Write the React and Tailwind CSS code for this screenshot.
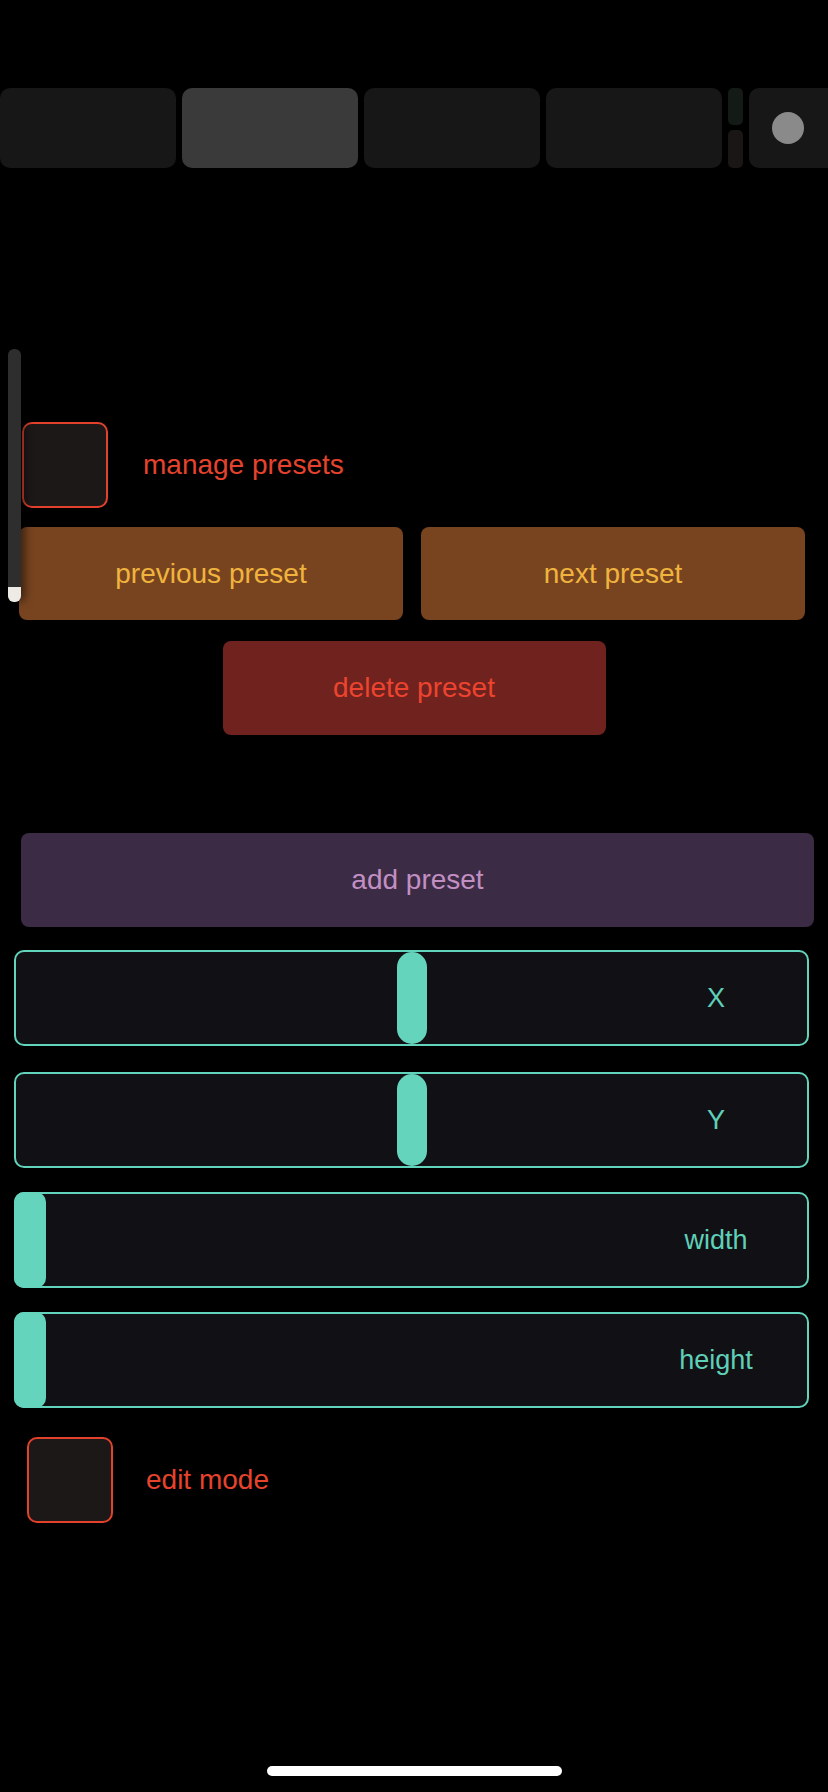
import React from 'react'

function Toggle({ label, className }) {
  return (
    <div className={"flex items-center " + className}>
      <div className="w-[86px] h-[86px] rounded-[10px] border-[2.5px] border-[#e2412c] bg-[#1c1817]" />
      <span className="text-[28px] text-[#e5432d]">{label}</span>
    </div>
  )
}

function Fader({ label, pos, className }) {
  return (
    <div className={"relative ml-[14px] w-[795px] h-[96px] rounded-[10px] border-[2.5px] border-[#62d4bb] bg-[#111115] " + className}>
      {pos === 'mid' ? (
        <div className="absolute top-0 bottom-0 left-[381px] w-[30px] rounded-full bg-[#64d5bc]" />
      ) : (
        <div className="absolute -top-[2px] -bottom-[2px] -left-[2px] w-[32px] rounded-[10px] bg-[#64d5bc]" />
      )}
      <span className="absolute top-1/2 -translate-y-1/2 left-[700px] -translate-x-1/2 text-[27px] text-[#5fd0b8]">{label}</span>
    </div>
  )
}

export default function App() {
  return (
    <div className="relative w-[828px] h-[1792px] bg-black overflow-hidden" style={{ fontFamily: '"Liberation Sans", Arial, sans-serif' }}>
      {/* top tab strip */}
      <div className="flex gap-[6px] h-[80px] mt-[88px]">
        <div className="w-[176px] shrink-0 rounded-[10px] bg-[#171717]" />
        <div className="w-[176px] shrink-0 rounded-[10px] bg-[#3a3a3a]" />
        <div className="w-[176px] shrink-0 rounded-[10px] bg-[#171717]" />
        <div className="w-[176px] shrink-0 rounded-[10px] bg-[#171717]" />
        <div className="w-[15px] shrink-0 flex flex-col gap-[5px]">
          <div className="h-[37px] rounded-[5px] bg-[#141a15]" />
          <div className="flex-1 rounded-[5px] bg-[#1b1616]" />
        </div>
        <div className="w-[90px] shrink-0 rounded-l-[10px] bg-[#171717] flex items-center pl-[23px]">
          <div className="w-[32px] h-[32px] rounded-full bg-[#8a8a8a]" />
        </div>
      </div>

      {/* vertical slider overlay */}
      <div className="absolute left-[8px] top-[349px] w-[13px] h-[253px] rounded-[6px] bg-[#2e2e2e] z-10 flex flex-col justify-end overflow-hidden shadow-[4px_0_8px_rgba(0,0,0,0.5)]">
        <div className="h-[15px] bg-[#eeebe7]" />
      </div>

      <Toggle label="manage presets" className="mt-[254px] ml-[22px] gap-[35px]" />

      <div className="flex gap-[18px] ml-[19px] mt-[19px]">
        <div className="w-[384px] h-[93px] rounded-[8px] bg-[#784420] flex items-center justify-center text-[28px] text-[#f0b43e]">previous preset</div>
        <div className="w-[384px] h-[93px] rounded-[8px] bg-[#784420] flex items-center justify-center text-[28px] text-[#f0b43e]">next preset</div>
      </div>

      <div className="mx-auto mt-[21px] w-[383px] h-[94px] rounded-[8px] bg-[#70221e] flex items-center justify-center text-[28px] text-[#ec442f]">delete preset</div>

      <div className="ml-[21px] mt-[98px] w-[793px] h-[94px] rounded-[8px] bg-[#3c2b45] flex items-center justify-center text-[28px] text-[#c28fc2]">add preset</div>

      <Fader label="X" pos="mid" className="mt-[23px]" />
      <Fader label="Y" pos="mid" className="mt-[26px]" />
      <Fader label="width" pos="start" className="mt-[24px]" />
      <Fader label="height" pos="start" className="mt-[24px]" />

      <Toggle label="edit mode" className="mt-[29px] ml-[27px] gap-[33px]" />

      <div className="absolute left-[267px] top-[1766px] w-[295px] h-[10px] rounded-full bg-white" />
    </div>
  )
}
